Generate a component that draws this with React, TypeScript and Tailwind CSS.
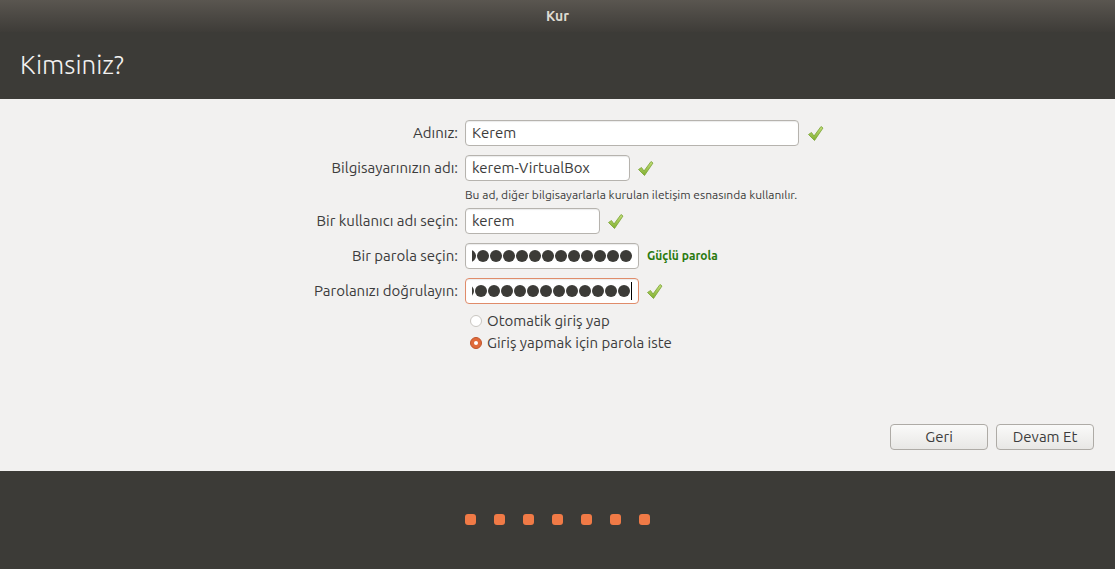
import React from "react";

const font = { fontFamily: "Ubuntu, 'Noto Sans', 'DejaVu Sans', sans-serif" };

function Check() {
  return (
    <svg width="17" height="17" viewBox="0 0 17 17" className="shrink-0">
      <defs>
        <linearGradient id="ck" x1="0" y1="0" x2="0" y2="1">
          <stop offset="0" stopColor="#c5e07a" />
          <stop offset="1" stopColor="#7fae2e" />
        </linearGradient>
      </defs>
      <path
        d="M1.5 9.5 L4.5 7.5 L7 11 L14 1.5 L16 3 L7.5 15.5 Z"
        fill="url(#ck)"
        stroke="#79a234"
        strokeWidth="0.8"
        strokeLinejoin="round"
      />
    </svg>
  );
}

function Dots({ cursor }: { cursor?: boolean }) {
  return (
    <div className="flex items-center justify-end overflow-hidden gap-[1px] w-full">
      {Array.from({ length: 14 }).map((_, i) => (
        <span key={i} className="w-[12px] h-[12px] rounded-full bg-[#3c3b37] shrink-0" />
      ))}
      {cursor && <span className="w-px h-[18px] bg-black shrink-0" />}
    </div>
  );
}

function Row({ label, children }: { label: string; children: React.ReactNode }) {
  return (
    <div className="flex items-center h-[26px]">
      <div className="w-[465px] pr-[7px] text-right text-[15px] text-[#3c3c3c] whitespace-nowrap">{label}</div>
      <div className="flex items-center">{children}</div>
    </div>
  );
}

const inputCls =
  "h-[26px] rounded-[4px] border border-[#b6b3ae] bg-white px-[6px] flex items-center text-[15px] text-[#3c3c3c] shadow-[inset_0_1px_1px_rgba(0,0,0,0.08)]";

const btnCls =
  "w-[98px] h-[26px] rounded-[4px] border border-[#aeaba6] bg-gradient-to-b from-[#fafaf9] to-[#e8e7e5] text-[15px] text-[#3c3c3c]";

export default function App() {
  return (
    <div className="w-[1115px] h-[569px] flex flex-col bg-[#f2f1f0] overflow-hidden" style={font}>
      <div className="h-[32px] bg-gradient-to-b from-[#5a5650] to-[#3e3c38] flex items-center justify-center">
        <span className="text-[14px] font-bold text-[#dfdbd2]">Kur</span>
      </div>
      <div className="h-[67px] bg-[#3c3b37] flex items-center px-[20px] pb-[2px]">
        <h1 className="text-[26px] text-[#f2f1f0] font-light">Kimsiniz?</h1>
      </div>

      <div className="flex-1 flex flex-col pt-[21px]">
        <div className="flex flex-col">
          <Row label="Adınız:">
            <div className={`${inputCls} w-[334px]`}>Kerem</div>
            <div className="ml-[8px]"><Check /></div>
          </Row>
          <div className="h-[9px]" />
          <Row label="Bilgisayarınızın adı:">
            <div className={`${inputCls} w-[165px]`}>kerem-VirtualBox</div>
            <div className="ml-[7px]"><Check /></div>
          </Row>
          <div className="pl-[465px] text-[12px] text-[#3c3c3c] h-[27px] flex items-center">
            Bu ad, diğer bilgisayarlarla kurulan iletişim esnasında kullanılır.
          </div>
          <Row label="Bir kullanıcı adı seçin:">
            <div className={`${inputCls} w-[135px]`}>kerem</div>
            <div className="ml-[7px]"><Check /></div>
          </Row>
          <div className="h-[9px]" />
          <Row label="Bir parola seçin:">
            <div className={`${inputCls} w-[174px]`}>
              <Dots />
            </div>
            <span className="ml-[8px] text-[12px] font-bold text-[#2a7a10]">Güçlü parola</span>
          </Row>
          <div className="h-[9px]" />
          <Row label="Parolanızı doğrulayın:">
            <div className={`${inputCls} w-[174px] border-[#e08c6a]`}>
              <Dots cursor />
            </div>
            <div className="ml-[7px]"><Check /></div>
          </Row>
          <div className="pl-[470px] pt-[9px] flex flex-col gap-[6px] text-[15px] text-[#3c3c3c]">
            <div className="flex items-center gap-[5px] h-[16px]">
              <span className="w-[12px] h-[12px] rounded-full border border-[#c9c6c1] bg-white" />
              Otomatik giriş yap
            </div>
            <div className="flex items-center gap-[5px] h-[16px]">
              <span className="w-[12px] h-[12px] rounded-full bg-[#e06a3a] border border-[#c0542a] flex items-center justify-center">
                <span className="w-[4px] h-[4px] rounded-full bg-white" />
              </span>
              Giriş yapmak için parola iste
            </div>
          </div>
        </div>

        <div className="flex-1" />
        <div className="flex justify-end gap-[8px] pr-[21px] pb-[21px]">
          <button className={btnCls}>Geri</button>
          <button className={btnCls}>Devam Et</button>
        </div>
      </div>

      <div className="h-[98px] bg-[#3c3b37] flex items-center justify-center gap-[18px] pb-[2px]">
        {Array.from({ length: 7 }).map((_, i) => (
          <span key={i} className="w-[11px] h-[11px] rounded-[3px] bg-[#f07a46]" />
        ))}
      </div>
    </div>
  );
}
